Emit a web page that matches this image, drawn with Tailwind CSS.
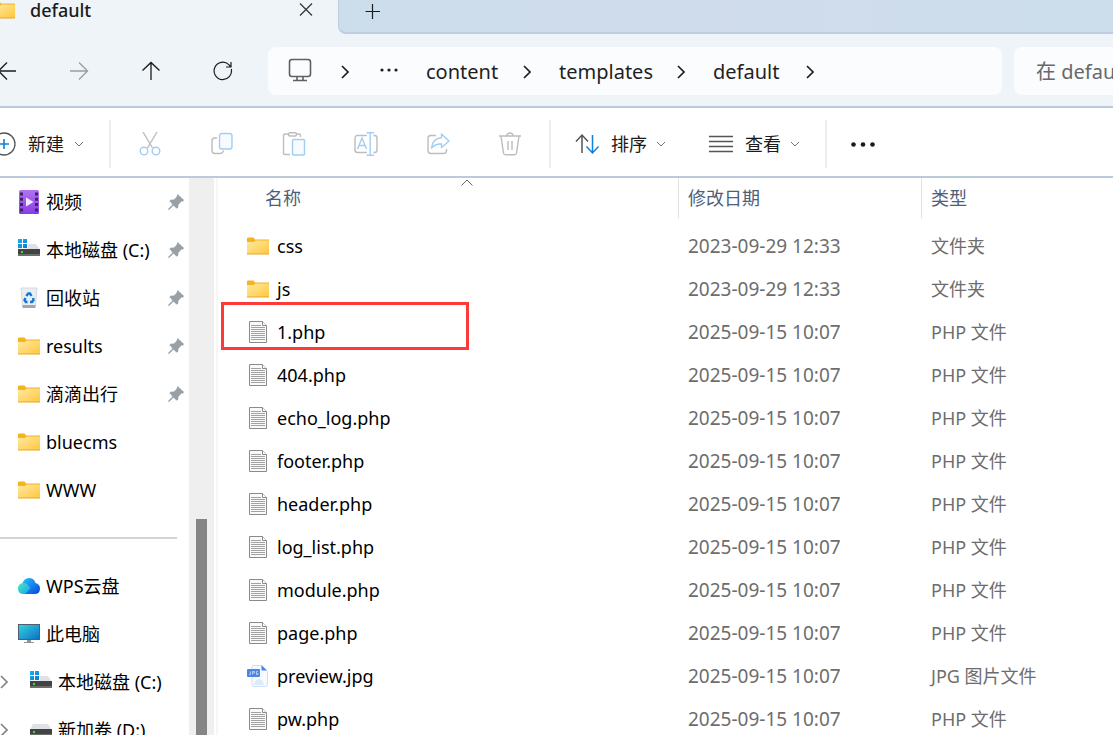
<!DOCTYPE html>
<html lang="zh-CN">
<head>
    <meta charset="UTF-8" />
    <meta name="viewport" content="width=device-width, initial-scale=1.0"/>
    <title>default</title>
    <script src="https://cdn.jsdelivr.net/npm/@tailwindcss/browser@4"></script>
</head>
<body class="h-screen flex flex-col overflow-hidden bg-white text-black text-[18px] font-['Noto_Sans','Noto_Sans_CJK_SC',sans-serif]">

    <!-- Iconos compartidos -->
    <svg class="absolute w-0 h-0" aria-hidden="true">
        <defs>
            <linearGradient id="g-folder" x1="0" y1="0" x2="1" y2="1"><stop offset="0" stop-color="#ffe9a6"/><stop offset="1" stop-color="#ffc83a"/></linearGradient>
            <linearGradient id="g-video" x1="0" y1="0" x2="0" y2="1"><stop offset="0" stop-color="#b173f0"/><stop offset="1" stop-color="#8a3be6"/></linearGradient>
            <linearGradient id="g-win" x1="0" y1="0" x2="1" y2="1"><stop offset="0" stop-color="#22b0ee"/><stop offset="1" stop-color="#0a78d0"/></linearGradient>
            <linearGradient id="g-pc" x1="0" y1="0" x2="1" y2="1"><stop offset="0" stop-color="#35d5e0"/><stop offset="1" stop-color="#0b6fc4"/></linearGradient>
            <linearGradient id="g-cloud" x1="0" y1="0" x2="1" y2="1"><stop offset="0" stop-color="#26c6ff"/><stop offset="1" stop-color="#0645d8"/></linearGradient>
            <linearGradient id="g-cloud2" x1="0" y1="0" x2="1" y2="1"><stop offset="0" stop-color="#4beab8"/><stop offset="1" stop-color="#17a0f5"/></linearGradient>
        </defs>
        <symbol id="i-folder" viewBox="0 0 22 18">
            <path d="M0 1.5Q0 .5 1 .5H6.5L8 2.5H22V6H0Z" fill="#f5b31c"/>
            <path d="M0 5H7L8.5 3.5H22V17H0Z" fill="url(#g-folder)"/>
            <path d="M0 16.5H22V17.5H0Z" fill="#e6a52a"/>
        </symbol>
        <symbol id="i-file" viewBox="0 0 18 22">
            <path d="M.5 .5H13.500L17.500 4.500V21.500H.5Z" fill="#fafafa" stroke="#8a8a8a"/>
            <path d="M13.500 .5V4.500H17.500" fill="#fff" stroke="#8a8a8a"/>
            <path d="M2 4.500H12M2 6.500H16M2 8.500H16M2 10.500H16M2 12.500H16M2 14.500H16M2 16.500H16M2 18.500H16" stroke="#a2a2a2"/>
        </symbol>
        <symbol id="i-jpg" viewBox="0 0 22 22">
            <path d="M5.500 .5H14L20.500 6.500V20Q20.500 21.500 19 21.500H7Q5 21.500 5 19.500V1Z" fill="#f7faff" stroke="#cfdffb"/>
            <path d="M14.500 0L20 5.500H14.500Z" fill="#4a86e8"/>
            <path d="M7 20Q8 14 12 14Q16 14 17 20Z" fill="#dfe9fc"/>
            <rect x="0" y="4" width="13" height="8" rx="1" fill="#4a86e8"/>
            <path d="M3.500 6.500V9.500H2M5.500 9.500V6.500H7.500V8H5.500M11 6.500H9.500V9.500H11V8" fill="none" stroke="#c9dbfa" stroke-width=".8"/>
        </symbol>
        <symbol id="i-video" viewBox="0 0 22 24">
            <rect x="1" y="0" width="20" height="24" rx="1.500" fill="url(#g-video)"/>
            <path d="M3.500 2.500V24M18.500 2.500V24" stroke="#3d2367" stroke-width="3" stroke-dasharray="3 2.300"/>
            <path d="M8 7.500V16.500L15.500 12Z" fill="#f3e9ff"/>
        </symbol>
        <symbol id="i-drive" viewBox="0 0 22 20">
            <path d="M3 5H18L22 11H0Z" fill="#dfe1e4"/>
            <rect x="0" y="10" width="22" height="7" fill="#434343"/>
            <rect x="0" y="15" width="22" height="2" fill="#6d6d6d"/>
            <rect x="3" y="12" width="2" height="2" fill="#35e03a"/>
        </symbol>
        <symbol id="i-drive-c" viewBox="0 0 22 20">
            <path d="M8 5H18L22 11H0V9Z" fill="#dfe1e4"/>
            <rect x="0" y="10" width="22" height="7" fill="#434343"/>
            <rect x="0" y="15" width="22" height="2" fill="#6d6d6d"/>
            <rect x="3" y="12" width="2" height="2" fill="#35e03a"/>
            <path d="M0 0H10V9.500H0Z" fill="#fff"/>
            <path d="M0 0H4V4H0ZM5 0H9V4H5ZM0 5H4V9H0ZM5 5H9V9H5Z" fill="url(#g-win)"/>
        </symbol>
        <symbol id="i-bin" viewBox="0 0 22 22">
            <path d="M3 1H19L17.500 19H4.500Z" fill="#e9eef2" stroke="#d4dade"/>
            <path d="M4.500 18H17.500V21H4.500Z" fill="#a3a8ac"/>
            <path d="M8.300 9L10.300 6.500H12L13.500 9M15 11L15.500 13L14 15H12M9.500 15H7.800L6.500 13L7.500 11" fill="none" stroke="#1478d4" stroke-width="2.400"/>
        </symbol>
        <symbol id="i-pc" viewBox="0 0 22 20">
            <rect x=".5" y=".5" width="21" height="15" fill="url(#g-pc)" stroke="#4f5f6d"/>
            <path d="M9 16H13V18H16V19H6V18H9Z" fill="#8b949b"/>
        </symbol>
        <symbol id="i-cloud" viewBox="0 0 22 18">
            <path d="M4 7Q6 1 11 1Q16 1 17.500 6Q22 7 22 11.500Q22 17 16.500 17H6Z" fill="url(#g-cloud)"/>
            <path d="M5.500 6Q9 6 10.500 9L12.500 11L7 17H5.500Q0 17 0 11.500Q0 6.500 5.500 6Z" fill="url(#g-cloud2)"/>
        </symbol>
        <symbol id="i-pin" viewBox="0 0 16 16">
            <path d="M9.500 0L16 6L15 7.500L13.500 7.500L10.500 10.500L10 14L8.500 14.500L5.500 11.500L1.500 15.500L0 16L.5 14.500L4.500 10.500L1.500 7L2.500 5.800L6 5.500L8.500 3Z" fill="#98a1a8"/>
        </symbol>
        <symbol id="i-down" viewBox="0 0 10 6">
            <path d="M1 1L5 5L9 1" fill="none" stroke="#707070"/>
        </symbol>
        <symbol id="i-right" viewBox="0 0 8 14">
            <path d="M1 1L7 7L1 13" fill="none" stroke="currentColor" stroke-width="1.700"/>
        </symbol>
    </svg>

    <!-- Pestañas -->
    <header class="flex h-[34px] shrink-0 bg-[#eff4f9]">
        <div class="flex w-[338px] h-5 items-center shrink-0 font-medium text-[#1b1b1b]">
            <svg class="w-[22px] h-[18px] -ml-[7px] shrink-0"><use href="#i-folder"/></svg>
            <span class="ml-[15px] leading-5">default</span>
            <button class="ml-auto mr-6" aria-label="关闭">
                <svg class="w-4 h-4 block" viewBox="0 0 16 16"><path d="M2 1.500L14 13.500M14 1.500L2 13.500" stroke="#333" stroke-width="1.200"/></svg>
            </button>
        </div>
        <div class="flex-1 rounded-bl-lg border-l border-b-2 border-[#becddf] bg-linear-to-r from-[#ccddeb] via-[#d0dcec] to-[#ccdeeb]">
            <button class="ml-[26px] mt-[2px]" aria-label="新标签页">
                <svg class="w-4 h-4 block" viewBox="0 0 16 16"><path d="M.5 7.500H15M7.500 0V15" stroke="#1b1b1b" stroke-width="1.200"/></svg>
            </button>
        </div>
    </header>

    <!-- Barra de direcciones -->
    <nav class="flex h-[74px] shrink-0 items-center border-b-2 border-[#bccbdb] bg-[#eff4f9] pt-[2px]">
        <div class="flex -ml-[29px] shrink-0 text-[#1b1b1b]">
            <button class="w-18 h-10 flex items-center justify-center" aria-label="后退">
                <svg class="w-5 h-5" viewBox="0 0 20 20" fill="none" stroke="currentColor" stroke-width="1.300"><path d="M19 10H1M10 1.500L1.500 10L10 18.500"/></svg>
            </button>
            <button class="w-18 h-10 flex items-center justify-center text-[#9a9da1]" aria-label="前进">
                <svg class="w-5 h-5" viewBox="0 0 20 20" fill="none" stroke="currentColor" stroke-width="1.300"><path d="M1 10H19M10 1.500L18.500 10L10 18.500"/></svg>
            </button>
            <button class="w-18 h-10 flex items-center justify-center" aria-label="向上">
                <svg class="w-5 h-5" viewBox="0 0 20 20" fill="none" stroke="currentColor" stroke-width="1.300"><path d="M10 19V1M1.500 9.500L10 1.500L18.500 9.500"/></svg>
            </button>
            <button class="w-18 h-10 flex items-center justify-center" aria-label="刷新">
                <svg class="w-5 h-5" viewBox="0 0 20 20" fill="none" stroke="currentColor" stroke-width="1.200"><path d="M18.300 8A8.700 8.700 0 1 1 15.800 3.600L17.500 5.500M18 1V6H13"/></svg>
            </button>
        </div>
        <div class="ml-[9px] flex h-12 flex-1 items-center rounded-lg bg-[#fbfcfe] pl-5 pt-[2px] text-[20px] text-[#1f1f1f]">
            <svg class="w-6 h-6 shrink-0 mb-1" viewBox="0 0 24 24" fill="none" stroke="#5f6062" stroke-width="1.600"><rect x="1.500" y="1.500" width="21" height="17" rx="2.500"/><path d="M9 18.500V22M15 18.500V22M5 22.500H19"/></svg>
            <svg class="w-2 h-[14px] ml-[29px]"><use href="#i-right"/></svg>
            <button class="ml-[31px]" aria-label="更多路径">
                <svg class="w-[18px] h-4 block" viewBox="0 0 18 16" fill="#1f1f1f"><circle cx="2" cy="6" r="1.600"/><circle cx="9" cy="6" r="1.600"/><circle cx="16" cy="6" r="1.600"/></svg>
            </button>
            <a href="#" class="w-[97px] ml-7">content</a>
            <svg class="w-2 h-[14px]"><use href="#i-right"/></svg>
            <a href="#" class="w-[118px] ml-7">templates</a>
            <svg class="w-2 h-[14px]"><use href="#i-right"/></svg>
            <a href="#" class="w-[93px] ml-7">default</a>
            <svg class="w-2 h-[14px]"><use href="#i-right"/></svg>
        </div>
        <input type="text" aria-label="搜索" placeholder="在 default 中搜索" class="ml-3 h-12 w-[99px] shrink-0 rounded-l-lg bg-[#fbfcfe] pl-[22px] text-[20px] placeholder:text-[#66686b] outline-none"/>
    </nav>

    <!-- Herramientas -->
    <div class="flex h-[70px] shrink-0 items-center border-b-2 border-[#bccbdb] pt-1 text-[#1b1b1b]">
        <button class="flex w-[109px] items-center -ml-2 shrink-0">
            <svg class="w-6 h-6 shrink-0" viewBox="0 0 24 24" fill="none"><circle cx="12" cy="12" r="11" stroke="#555" stroke-width="1.300"/><path d="M12 7V17M7 12H17" stroke="#0f7fd9" stroke-width="1.600"/></svg>
            <span class="ml-3">新建</span>
            <svg class="w-[10px] h-[6px] ml-[10px]"><use href="#i-down"/></svg>
        </button>
        <div class="ml-2 h-12 w-[2px] bg-[#ededed]"></div>
        <div class="flex ml-[3px] mr-[3px] shrink-0">
            <button disabled class="w-18 flex justify-center" aria-label="剪切">
                <svg class="w-6 h-6" viewBox="0 0 24 24" fill="none" stroke-width="1.400"><path d="M5 0L14.500 16M19 0L9.500 16" stroke="#bdbdbd"/><circle cx="6" cy="19" r="3.800" stroke="#a3cdf1"/><circle cx="18" cy="19" r="3.800" stroke="#a3cdf1"/></svg>
            </button>
            <button disabled class="w-18 flex justify-center" aria-label="复制">
                <svg class="w-6 h-6" viewBox="0 0 24 24" fill="none" stroke-width="1.400"><path d="M7 6H5Q2 6 2 9V18Q2 21.500 5 21.500H10Q13 21.500 13.500 18.500" stroke="#bdbdbd"/><rect x="9.500" y="1.500" width="12.500" height="15.500" rx="2.500" stroke="#a3cdf1" fill="#f7fbff"/></svg>
            </button>
            <button disabled class="w-18 flex justify-center" aria-label="粘贴">
                <svg class="w-6 h-6" viewBox="0 0 24 24" fill="none" stroke-width="1.400"><path d="M7 2H3Q1.500 2 1.500 3.500V21Q1.500 22.500 3 22.500H8M14 2H17Q18.500 2 18.500 3.500V5" stroke="#bdbdbd"/><rect x="6.500" y=".7" width="8" height="3.300" rx="1.500" stroke="#bdbdbd"/><rect x="10.500" y="7.500" width="12" height="15.500" rx="1" stroke="#a3cdf1" fill="#f7fbff"/></svg>
            </button>
            <button disabled class="w-18 flex justify-center" aria-label="重命名">
                <svg class="w-6 h-6" viewBox="0 0 24 24" fill="none" stroke-width="1.400"><path d="M13 3.500H3.500Q1 3.500 1 6V18Q1 20.500 3.500 20.500H13M19.500 3.500H20.500Q23 3.500 23 6V18Q23 20.500 20.500 20.500H19.500" stroke="#bdbdbd"/><path d="M3.500 17L8 6L12.500 17M5 13.500H11M16.200 1V23M12.500 .8H20M12.500 23.200H20" stroke="#a3cdf1"/></svg>
            </button>
            <button disabled class="w-18 flex justify-center" aria-label="共享">
                <svg class="w-6 h-6" viewBox="0 0 24 24" fill="none" stroke-width="1.400"><path d="M10 3.500H5Q2 3.500 2 6.500V18.500Q2 21.500 5 21.500H17.500Q20.500 21.500 20.500 18.500V17" stroke="#bdbdbd"/><path d="M15.500 2L23 9L15.500 15.500V12Q9.500 11.500 5.500 16Q6.500 6.500 15.500 5.800Z" stroke="#a3cdf1" stroke-linejoin="round"/></svg>
            </button>
            <button disabled class="w-18 flex justify-center" aria-label="删除">
                <svg class="w-6 h-6" viewBox="0 0 24 24" fill="none" stroke="#bdbdbd" stroke-width="1.400"><path d="M1 4H23M3 4L5.500 21Q5.800 22.800 7.500 22.800H16.500Q18.200 22.800 18.500 21L21 4M9 4Q9 1 12 1Q15 1 15 4M10 9V18M14 9V18"/></svg>
            </button>
        </div>
        <div class="h-12 w-[2px] bg-[#ededed]"></div>
        <button class="flex items-center ml-6 shrink-0">
            <svg class="w-6 h-6" viewBox="0 0 24 24" fill="none" stroke-width="1.500"><path d="M7 21V3M1 9.500L7 3L13 9.500" stroke="#555"/><path d="M17.500 3V21M11.500 14.500L17.500 21L23.500 14.500" stroke="#0f7fd9"/></svg>
            <span class="ml-3">排序</span>
            <svg class="w-[10px] h-[6px] ml-[9px]"><use href="#i-down"/></svg>
        </button>
        <button class="flex items-center ml-[43px] shrink-0">
            <svg class="w-6 h-6" viewBox="0 0 24 24" stroke="#555" stroke-width="1.300"><path d="M0 4.500H24M0 9.500H24M0 14.500H24M0 19.500H24"/></svg>
            <span class="ml-3">查看</span>
            <svg class="w-[10px] h-[6px] ml-[9px]"><use href="#i-down"/></svg>
        </button>
        <div class="ml-[25px] h-12 w-[2px] bg-[#ededed]"></div>
        <button class="ml-6" aria-label="更多">
            <svg class="w-6 h-6 block" viewBox="0 0 24 24" fill="#1b1b1b"><circle cx="2.500" cy="12.500" r="2.300"/><circle cx="12" cy="12.500" r="2.300"/><circle cx="21.500" cy="12.500" r="2.300"/></svg>
        </button>
    </div>

    <main class="flex flex-1 min-h-0">
        <!-- Panel lateral -->
        <aside class="w-[189px] shrink-0 overflow-hidden whitespace-nowrap">
            <a href="#" class="flex h-12 items-center pl-[18px] pr-[5px]">
                <svg class="w-[22px] h-6 shrink-0"><use href="#i-video"/></svg>
                <span class="ml-[6px]">视频</span>
                <svg class="w-4 h-4 ml-auto shrink-0"><use href="#i-pin"/></svg>
            </a>
            <a href="#" class="flex h-12 items-center pl-[18px] pr-[5px]">
                <svg class="w-[22px] h-5 mb-[2px] shrink-0"><use href="#i-drive-c"/></svg>
                <span class="ml-[6px]">本地磁盘 (C:)</span>
                <svg class="w-4 h-4 ml-auto shrink-0"><use href="#i-pin"/></svg>
            </a>
            <a href="#" class="flex h-12 items-center pl-[18px] pr-[5px]">
                <svg class="w-[22px] h-[22px] shrink-0"><use href="#i-bin"/></svg>
                <span class="ml-[6px]">回收站</span>
                <svg class="w-4 h-4 ml-auto shrink-0"><use href="#i-pin"/></svg>
            </a>
            <a href="#" class="flex h-12 items-center pl-[18px] pr-[5px]">
                <svg class="w-[22px] h-[18px] shrink-0"><use href="#i-folder"/></svg>
                <span class="ml-[6px]">results</span>
                <svg class="w-4 h-4 ml-auto shrink-0"><use href="#i-pin"/></svg>
            </a>
            <a href="#" class="flex h-12 items-center pl-[18px] pr-[5px]">
                <svg class="w-[22px] h-[18px] shrink-0"><use href="#i-folder"/></svg>
                <span class="ml-[6px]">滴滴出行</span>
                <svg class="w-4 h-4 ml-auto shrink-0"><use href="#i-pin"/></svg>
            </a>
            <a href="#" class="flex h-12 items-center pl-[18px] pr-[5px]">
                <svg class="w-[22px] h-[18px] shrink-0"><use href="#i-folder"/></svg>
                <span class="ml-[6px]">bluecms</span>
            </a>
            <a href="#" class="flex h-12 items-center pl-[18px] pr-[5px]">
                <svg class="w-[22px] h-[18px] shrink-0"><use href="#i-folder"/></svg>
                <span class="ml-[6px]">WWW</span>
            </a>
            <div class="flex h-12 items-center pr-3">
                <hr class="w-full border-t-2 border-[#d3d3d3]"/>
            </div>
            <a href="#" class="flex h-12 items-center pl-[18px]">
                <svg class="w-[22px] h-[18px] shrink-0"><use href="#i-cloud"/></svg>
                <span class="ml-[6px]">WPS云盘</span>
            </a>
            <a href="#" class="flex h-12 items-center pl-[18px]">
                <svg class="w-[22px] h-5 shrink-0"><use href="#i-pc"/></svg>
                <span class="ml-[6px]">此电脑</span>
            </a>
            <a href="#" class="flex h-12 items-center">
                <svg class="w-2 h-[14px] shrink-0 text-[#858585]"><use href="#i-right"/></svg>
                <svg class="w-[22px] h-5 mb-[2px] ml-[22px] shrink-0"><use href="#i-drive-c"/></svg>
                <span class="ml-[6px]">本地磁盘 (C:)</span>
            </a>
            <a href="#" class="flex h-12 items-center">
                <svg class="w-2 h-[14px] shrink-0 text-[#858585]"><use href="#i-right"/></svg>
                <svg class="w-[22px] h-5 mb-[2px] ml-[22px] shrink-0"><use href="#i-drive"/></svg>
                <span class="ml-[6px]">新加卷 (D:)</span>
            </a>
        </aside>
        <div class="w-[25px] shrink-0 bg-[#efefef] px-[7px] pt-[341px]">
            <div class="h-full bg-[#858585]"></div>
        </div>
        <div class="ml-[2px] w-[2px] shrink-0 bg-[#f6f6f6]"></div>

        <!-- Lista de archivos -->
        <section class="flex-1 min-w-0 overflow-hidden">
            <table class="w-full table-fixed text-left whitespace-nowrap">
                <thead class="text-[#4c607a]">
                    <tr class="h-[47px] align-top">
                        <th class="relative w-[460px] p-0 font-normal">
                            <div class="flex h-10 items-center pl-[47px]">名称</div>
                            <svg class="absolute left-[243px] top-[1px] w-3 h-[7px]" viewBox="0 0 12 7"><path d="M.5 6.500L6 1L11.500 6.500" fill="none" stroke="#666"/></svg>
                        </th>
                        <th class="w-[243px] p-0 font-normal"><div class="flex h-10 items-center border-l border-[#e2e2e2] pl-[9px]">修改日期</div></th>
                        <th class="p-0 font-normal"><div class="flex h-10 items-center border-l border-[#e2e2e2] pl-[9px]">类型</div></th>
                    </tr>
                </thead>
                <tbody class="text-[#6d6d6d]">
                    <tr class="h-[43px]">
                        <td class="p-0 text-black"><div class="flex items-center pl-[29px]"><svg class="w-[22px] h-[18px] mr-2 mb-[2px]"><use href="#i-folder"/></svg>css</div></td>
                        <td class="p-0 pl-[10px] text-[19px]">2023-09-29 12:33</td>
                        <td class="p-0 pl-[10px]">文件夹</td>
                    </tr>
                    <tr class="h-[43px]">
                        <td class="p-0 text-black"><div class="flex items-center pl-[29px]"><svg class="w-[22px] h-[18px] mr-2 mb-[2px]"><use href="#i-folder"/></svg>js</div></td>
                        <td class="p-0 pl-[10px] text-[19px]">2023-09-29 12:33</td>
                        <td class="p-0 pl-[10px]">文件夹</td>
                    </tr>
                    <tr class="h-[43px]">
                        <td class="relative p-0 text-black">
                            <div class="flex items-center pl-[31px]"><svg class="w-[18px] h-[22px] mr-[10px] mb-[2px]"><use href="#i-file"/></svg>1.php</div>
                            <div class="absolute left-[3px] -top-[9px] h-12 w-[248px] border-3 border-[#fd3a3a]"></div>
                        </td>
                        <td class="p-0 pl-[10px] text-[19px]">2025-09-15 10:07</td>
                        <td class="p-0 pl-[10px]">PHP 文件</td>
                    </tr>
                    <tr class="h-[43px]">
                        <td class="p-0 text-black"><div class="flex items-center pl-[31px]"><svg class="w-[18px] h-[22px] mr-[10px] mb-[2px]"><use href="#i-file"/></svg>404.php</div></td>
                        <td class="p-0 pl-[10px] text-[19px]">2025-09-15 10:07</td>
                        <td class="p-0 pl-[10px]">PHP 文件</td>
                    </tr>
                    <tr class="h-[43px]">
                        <td class="p-0 text-black"><div class="flex items-center pl-[31px]"><svg class="w-[18px] h-[22px] mr-[10px] mb-[2px]"><use href="#i-file"/></svg>echo_log.php</div></td>
                        <td class="p-0 pl-[10px] text-[19px]">2025-09-15 10:07</td>
                        <td class="p-0 pl-[10px]">PHP 文件</td>
                    </tr>
                    <tr class="h-[43px]">
                        <td class="p-0 text-black"><div class="flex items-center pl-[31px]"><svg class="w-[18px] h-[22px] mr-[10px] mb-[2px]"><use href="#i-file"/></svg>footer.php</div></td>
                        <td class="p-0 pl-[10px] text-[19px]">2025-09-15 10:07</td>
                        <td class="p-0 pl-[10px]">PHP 文件</td>
                    </tr>
                    <tr class="h-[43px]">
                        <td class="p-0 text-black"><div class="flex items-center pl-[31px]"><svg class="w-[18px] h-[22px] mr-[10px] mb-[2px]"><use href="#i-file"/></svg>header.php</div></td>
                        <td class="p-0 pl-[10px] text-[19px]">2025-09-15 10:07</td>
                        <td class="p-0 pl-[10px]">PHP 文件</td>
                    </tr>
                    <tr class="h-[43px]">
                        <td class="p-0 text-black"><div class="flex items-center pl-[31px]"><svg class="w-[18px] h-[22px] mr-[10px] mb-[2px]"><use href="#i-file"/></svg>log_list.php</div></td>
                        <td class="p-0 pl-[10px] text-[19px]">2025-09-15 10:07</td>
                        <td class="p-0 pl-[10px]">PHP 文件</td>
                    </tr>
                    <tr class="h-[43px]">
                        <td class="p-0 text-black"><div class="flex items-center pl-[31px]"><svg class="w-[18px] h-[22px] mr-[10px] mb-[2px]"><use href="#i-file"/></svg>module.php</div></td>
                        <td class="p-0 pl-[10px] text-[19px]">2025-09-15 10:07</td>
                        <td class="p-0 pl-[10px]">PHP 文件</td>
                    </tr>
                    <tr class="h-[43px]">
                        <td class="p-0 text-black"><div class="flex items-center pl-[31px]"><svg class="w-[18px] h-[22px] mr-[10px] mb-[2px]"><use href="#i-file"/></svg>page.php</div></td>
                        <td class="p-0 pl-[10px] text-[19px]">2025-09-15 10:07</td>
                        <td class="p-0 pl-[10px]">PHP 文件</td>
                    </tr>
                    <tr class="h-[43px]">
                        <td class="p-0 text-black"><div class="flex items-center pl-[29px]"><svg class="w-[22px] h-[22px] mr-2 mb-[2px]"><use href="#i-jpg"/></svg>preview.jpg</div></td>
                        <td class="p-0 pl-[10px] text-[19px]">2025-09-15 10:07</td>
                        <td class="p-0 pl-[10px]">JPG 图片文件</td>
                    </tr>
                    <tr class="h-[43px]">
                        <td class="p-0 text-black"><div class="flex items-center pl-[31px]"><svg class="w-[18px] h-[22px] mr-[10px] mb-[2px]"><use href="#i-file"/></svg>pw.php</div></td>
                        <td class="p-0 pl-[10px] text-[19px]">2025-09-15 10:07</td>
                        <td class="p-0 pl-[10px]">PHP 文件</td>
                    </tr>
                </tbody>
            </table>
        </section>
    </main>
</body>
</html>
